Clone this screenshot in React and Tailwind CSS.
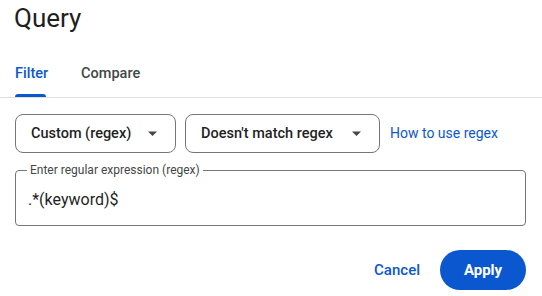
import React from "react";

// small filled caret used by the select boxes
function Caret() {
  return (
    <svg width="9" height="5" viewBox="0 0 9 5" className="shrink-0">
      <path d="M0 0.5h9L4.5 5z" fill="#444746" />
    </svg>
  );
}

function SelectBox({ label, width, gap }) {
  return (
    <button
      className={`flex items-center h-[39px] pl-[15px] border border-[#747775] rounded-lg text-[14.5px] font-medium text-[#1f1f1f] ${width}`}
    >
      <span>{label}</span>
      <span className={gap}>
        <Caret />
      </span>
    </button>
  );
}

export default function App() {
  return (
    <div
      className="w-[542px] h-[296px] bg-white text-[#1f1f1f] overflow-hidden"
      style={{ fontFamily: "Roboto, 'Open Sans', sans-serif" }}
    >
      <h1 className="pl-[14px] pt-[2px] text-[26px] leading-[32px] font-normal">Query</h1>

      {/* tabs */}
      <div className="mt-[27px] flex border-b border-[#e0e0e0] pl-[15px] gap-[33px] text-[14.5px] font-medium">
        <div className="flex flex-col">
          <span className="text-[#0b57d0] leading-[26px]">Filter</span>
          <span className="h-[3px] w-[31px] bg-[#0b57d0] rounded-t-sm mt-[7px]" />
        </div>
        <span className="text-[#444746] leading-[26px]">Compare</span>
      </div>

      {/* selectors */}
      <div className="mt-[16px] pl-[15px] flex items-center gap-[9px]">
        <SelectBox label="Custom (regex)" width="w-[161px]" gap="ml-[17px]" />
        <SelectBox label="Doesn't match regex" width="w-[195px]" gap="ml-[19px]" />
        <a className="ml-[1px] text-[14px] text-[#0b57d0]">How to use regex</a>
      </div>

      {/* regex field */}
      <fieldset className="mt-[11px] ml-[15px] w-[511px] h-[62px] border border-[#747775] rounded px-[11px]">
        <legend className="px-[3px] text-[12px] leading-[12px] text-[#444746]">
          Enter regular expression (regex)
        </legend>
        <div className="pl-[1px] pt-[14px] text-[16px] leading-[20px]">.*(keyword)$</div>
      </fieldset>

      {/* actions */}
      <div className="mt-[24px] pr-[16px] flex justify-end items-center gap-[20px]">
        <button className="text-[15px] font-medium text-[#0b57d0]">Cancel</button>
        <button className="h-[40px] w-[86px] rounded-full bg-[#0b57d0] text-white text-[15px] font-bold">
          Apply
        </button>
      </div>
    </div>
  );
}
